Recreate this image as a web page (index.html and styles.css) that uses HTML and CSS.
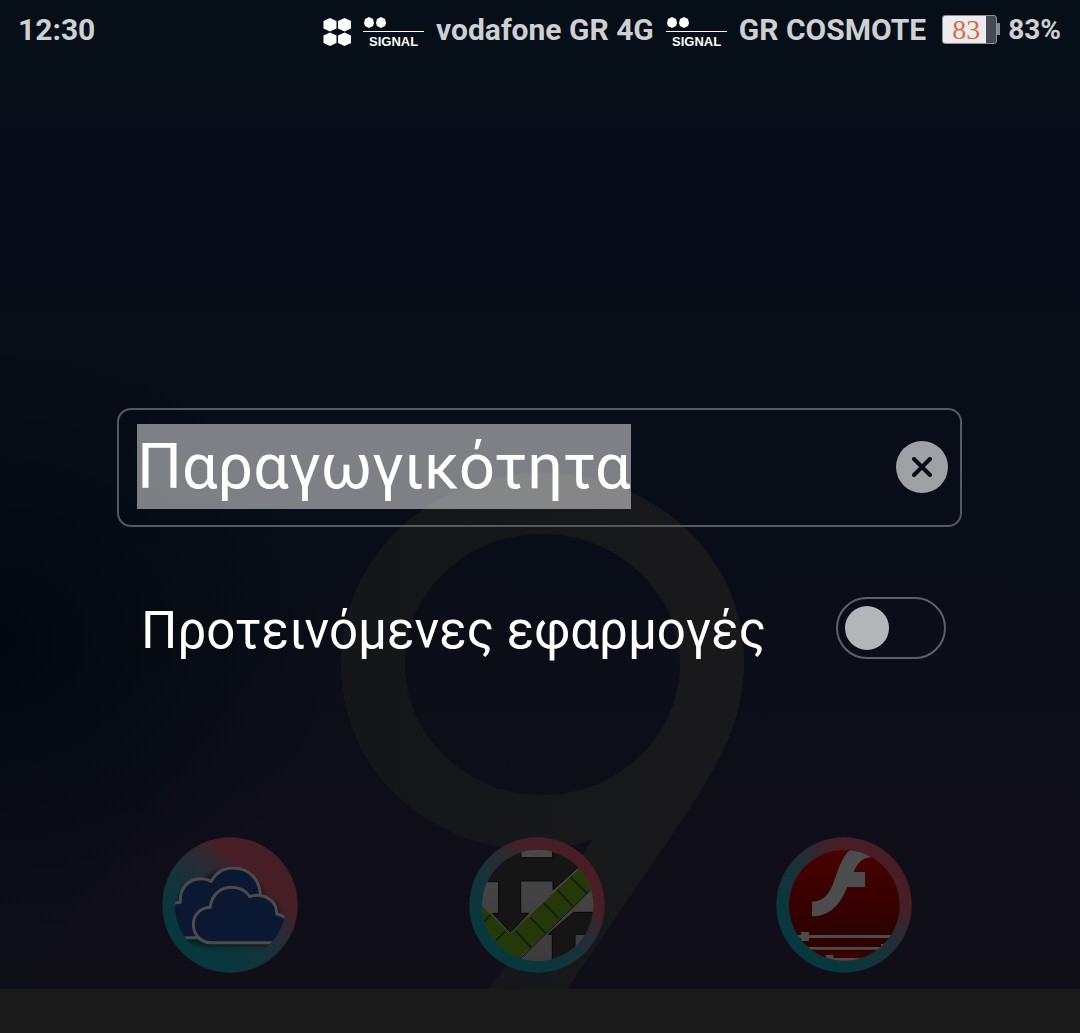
FILE: index.html
```html
<!DOCTYPE html>
<html lang="el">
<head>
    <meta charset="UTF-8">
    <meta name="viewport" content="width=device-width, initial-scale=1">
    <title>Παραγωγικότητα</title>
    <link rel="stylesheet" href="styles.css">
</head>
<body>
    <svg class="wallpaper" viewBox="0 0 1080 1033" preserveAspectRatio="xMidYMin slice" aria-hidden="true">
        <defs>
            <linearGradient id="nine" x1="0" y1="0" x2="1" y2="0">
                <stop offset="0" stop-color="#141619"/>
                <stop offset="1" stop-color="#19191b"/>
            </linearGradient>
            <radialGradient id="shade">
                <stop offset="0" stop-color="#00070e" stop-opacity=".8"/>
                <stop offset="1" stop-color="#00070e" stop-opacity="0"/>
            </radialGradient>
            <linearGradient id="beam" x1="0" y1="0" x2="0" y2="1">
                <stop offset="0" stop-color="#120d1a" stop-opacity="0"/>
                <stop offset="1" stop-color="#120d1a" stop-opacity=".5"/>
            </linearGradient>
        </defs>
        <ellipse cx="0" cy="640" rx="340" ry="300" fill="url(#shade)"/>
        <path fill="url(#beam)" d="M16 989L370 520H1080V989z"/>
        <path fill="url(#nine)" fill-rule="evenodd" d="M341 664C341 557 430 473 542 473S744 557 744 660C744 702 733 736 711 773C699 795 684 817 667 842L567 989H489L593 839C574 846 555 850 535 850C425 848 341 769 341 664zM405 664C405 736 466 795 542 795S680 736 680 664S618 534 542 534S405 592 405 664z"/>
    </svg>

    <header class="status-bar">
        <time class="status-text">12:30</time>
        <div class="status-icons">
            <svg width="28" height="32" viewBox="326 14 28 32" fill="#fff" aria-hidden="true">
                <path id="hex" d="M333 18L339.500 21V28.500L333 31.500L326.500 28.500V21z"/>
                <use href="#hex" x="14.500"/>
                <use href="#hex" y="14.500"/>
                <use href="#hex" x="14.500" y="14.500"/>
            </svg>
            <svg class="signal" width="61" height="40" viewBox="0 -4 61 40" fill="#fff">
                <path d="M6 3l4 2l1 4l-1 3l-4 2l-4 -2l-1 -3l1 -4zM18 3l4 2l1 4l-1 3l-4 2l-4 -2l-1 -3l1 -4zM0 17h61v1H0z"/>
                <text x="6" y="32">SIGNAL</text>
            </svg>
            <span class="status-text">vodafone GR 4G</span>
            <svg class="signal" width="61" height="40" viewBox="0 -4 61 40" fill="#fff">
                <path d="M6 3l4 2l1 4l-1 3l-4 2l-4 -2l-1 -3l1 -4zM18 3l4 2l1 4l-1 3l-4 2l-4 -2l-1 -3l1 -4zM0 17h61v1H0z"/>
                <text x="6" y="32">SIGNAL</text>
            </svg>
            <span class="status-text">GR COSMOTE</span>
            <div class="battery">
                <span class="battery-level">83</span>
                <span class="battery-tip"></span>
            </div>
            <span class="status-percent">83%</span>
        </div>
    </header>

    <main class="folder">
        <form class="folder-form" id="folderForm">
            <div class="name-field">
                <input type="text" class="name-input" id="folderName" value="Παραγωγικότητα" aria-label="Όνομα φακέλου" spellcheck="false" autocomplete="off">
                <button type="button" class="clear-button" id="clearName" aria-label="Διαγραφή">
                    <svg width="20" height="20" viewBox="0 0 20 20" fill="none" stroke="#080d18" stroke-width="4" stroke-linecap="round">
                        <path d="M2 2L18 18M18 2L2 18"/>
                    </svg>
                </button>
            </div>
            <div class="suggest-row">
                <label class="suggest-label" for="suggestApps">Προτεινόμενες εφαρμογές</label>
                <input type="checkbox" class="switch" id="suggestApps" role="switch">
            </div>
        </form>

        <div class="apps">
            <svg class="app-icon" viewBox="36 36 408 408" role="img" aria-label="OneDrive">
                <defs>
                    <linearGradient id="ring" gradientUnits="userSpaceOnUse" x1="130" y1="360" x2="360" y2="100">
                        <stop offset="0" stop-color="#06383d"/>
                        <stop offset=".3" stop-color="#12343a"/>
                        <stop offset=".6" stop-color="#292b34"/>
                        <stop offset=".8" stop-color="#481e26"/>
                    </linearGradient>
                    <clipPath id="disc"><circle cx="241" cy="241" r="166"/></clipPath>
                    <filter id="soft" x="-20%" y="-20%" width="140%" height="140%">
                        <feGaussianBlur stdDeviation="7"/>
                    </filter>
                </defs>
                <circle cx="240" cy="240" r="203" fill="url(#ring)"/>
                <g clip-path="url(#disc)">
                    <path fill="#000" opacity=".4" filter="url(#soft)" d="M75 350V240Q95 170 155 166Q190 130 250 132Q330 145 345 215Q390 225 390 265Q430 290 400 365H170z"/>
                    <g fill="#0a1831" stroke="#4c4c4c" stroke-width="9" stroke-linejoin="round">
                        <path d="M50 338V250Q65 233 91 232C88 190 116 161 152 161Q170 161 184 169C198 143 222 129 249 129C296 129 332 163 331 215V338z"/>
                        <path d="M184 353C150 353 130 327 130 298C130 270 151 248 181 247C184 211 210 187 245 187C270 187 289 199 299 215C343 200 382 229 380 267C402 270 420 286 420 310C420 338 402 353 380 353z"/>
                    </g>
                </g>
            </svg>

            <svg class="app-icon" viewBox="38 36 408 408" role="img" aria-label="Check">
                <defs>
                    <linearGradient id="paper" x1="0" y1="0" x2="0" y2="1">
                        <stop offset="0" stop-color="#484848"/>
                        <stop offset="1" stop-color="#3c3c3c"/>
                    </linearGradient>
                    <clipPath id="checkDisc"><circle cx="244" cy="241" r="167"/></clipPath>
                </defs>
                <circle cx="242" cy="240" r="203" fill="url(#ring)"/>
                <g clip-path="url(#checkDisc)">
                    <path fill="url(#paper)" d="M70 70H415V410H70z"/>
                    <g fill="#151515" stroke="#080808" stroke-width="3">
                        <path d="M60 60H194V98H289V60H420V130H362L290 195V168H193V265H217L162 323L109 265H127V170H60z"/>
                        <path d="M275 328L352 262H425V328H356V420H288V328z"/>
                    </g>
                    <path fill="#253809" stroke="#484848" stroke-width="3" d="M50 216L77 242L162 325L372 126L425 176L190 400L160 410L50 300z"/>
                    <path fill="none" stroke="#101b04" stroke-width="5" d="M342 155L392 205M302 194L348 243M262 234L307 280M222 278L268 324M178 318L225 368M84 289L104 269M118 347L146 320"/>
                    <path fill="none" stroke="#0b1204" stroke-width="3" d="M402 196L195 398L160 408"/>
                </g>
            </svg>

            <svg class="app-icon" viewBox="36 36 408 408" role="img" aria-label="Flash">
                <defs>
                    <linearGradient id="flashRed" x1="0" y1="0" x2="0" y2="1">
                        <stop offset="0" stop-color="#480202"/>
                        <stop offset=".8" stop-color="#2c0000"/>
                        <stop offset="1" stop-color="#3c0000"/>
                    </linearGradient>
                </defs>
                <circle cx="240" cy="240" r="203" fill="url(#ring)"/>
                <circle cx="241" cy="241" r="166" fill="url(#flashRed)"/>
                <g clip-path="url(#disc)" fill="#4c4c4c">
                    <path d="M144 230C205 230 207 160 232 112C245 85 255 70 290 60L325 96C296 98 281 112 269 141H303V186H250C232 229 205 274 144 274z"/>
                    <path d="M60 330H51H430V339H60zM111 321H135V348H111zM70 366H420V374H70zM351 357H375V370H351zM186 390H208V402H186zM170 399H320V408H170z"/>
                </g>
            </svg>
        </div>
    </main>

    <footer class="nav-bar"></footer>

    <script>
        const nameInput = document.getElementById('folderName');

        // Open with the whole folder name selected
        nameInput.focus();
        nameInput.select();

        document.getElementById('clearName').addEventListener('click', () => {
            nameInput.value = '';
            nameInput.focus();
        });

        document.getElementById('folderForm').addEventListener('submit', (e) => {
            e.preventDefault();
            nameInput.blur();
        });
    </script>
</body>
</html>
```
FILE: styles.css
```css
* {
    box-sizing: border-box;
}
body {
    position: relative;
    display: flex;
    flex-direction: column;
    min-height: 100vh;
    margin: 0;
    overflow-x: hidden;
    font-family: Roboto, "Noto Sans", sans-serif;
    color: #fff;
    background: linear-gradient(#060f18, #070c18 22%, #080d17 50%, #0e0e18 85%, #0f1019);
}

/* Wallpaper behind everything */
.wallpaper {
    position: absolute;
    inset: 0;
    z-index: -1;
    width: 100%;
    height: 100%;
}

/* Status bar */
.status-bar {
    display: flex;
    align-items: center;
    justify-content: space-between;
    height: 60px;
    padding: 0 19px 0 18px;
    color: #cfd0d2;
}
.status-icons {
    display: flex;
    align-items: center;
    gap: 12px;
}
.status-text {
    font-size: 30px;
    font-weight: 700;
    line-height: 60px;
    white-space: nowrap;
}
.status-percent {
    font-size: 28px;
    font-weight: 700;
    line-height: 60px;
}
.signal text {
    font: bold 13px "Liberation Sans", Arial, sans-serif;
}
.battery {
    display: flex;
    align-items: center;
    margin: 0 -4px 2px 4px;
}
.battery-level {
    width: 55px;
    height: 29px;
    padding-right: 7px;
    border: 1px solid #8d9196;
    border-radius: 3px;
    font: 28px/27px "Liberation Serif", serif;
    text-align: center;
    color: #d96b42;
    background: linear-gradient(to right, #ececee 82%, #444a54 82%);
}
.battery-tip {
    width: 3px;
    height: 12px;
    background: #85888c;
}

/* Folder editor */
.folder {
    flex: 1;
    display: flex;
    flex-direction: column;
    justify-content: space-between;
    padding: 348px 0 16px;
}
.folder-form {
    display: flex;
    flex-direction: column;
    gap: 70px;
    padding: 0 118px 0 117px;
}
.name-field {
    display: flex;
    align-items: center;
    height: 119px;
    padding: 0 12px 2px 18px;
    border: 2px solid #565961;
    border-radius: 14px;
}
.name-input {
    flex: 1;
    min-width: 0;
    height: 85px;
    padding: 0;
    border: none;
    outline: none;
    font: 63px/85px Roboto, "Noto Sans", sans-serif;
    color: #fff;
    background: transparent;
}
.name-input::selection {
    color: #fff;
    background: rgba(255, 255, 255, 0.48);
}
.clear-button {
    display: flex;
    align-items: center;
    justify-content: center;
    width: 52px;
    height: 52px;
    padding: 0;
    border: none;
    border-radius: 50%;
    background: #9fa1a5;
    cursor: pointer;
}
.suggest-row {
    display: flex;
    align-items: flex-start;
    justify-content: space-between;
    padding: 0 16px 0 24px;
}
.suggest-label {
    padding-top: 3px;
    font-size: 51px;
    line-height: 62px;
}
.switch {
    appearance: none;
    display: flex;
    align-items: center;
    flex-shrink: 0;
    width: 110px;
    height: 62px;
    margin: 0;
    padding: 0 7px;
    border: 2px solid #5f6168;
    border-radius: 31px;
    cursor: pointer;
}
.switch::before {
    content: "";
    width: 44px;
    height: 44px;
    border-radius: 50%;
    background: #b5b6ba;
}
.switch:checked {
    justify-content: flex-end;
}

/* App icons */
.apps {
    display: grid;
    grid-template-columns: repeat(3, 1fr);
    justify-items: center;
    padding: 0 83px 0 76px;
}
.app-icon {
    width: 136px;
    height: 136px;
}

.nav-bar {
    height: 44px;
    background: #1a1a1b;
}
```
